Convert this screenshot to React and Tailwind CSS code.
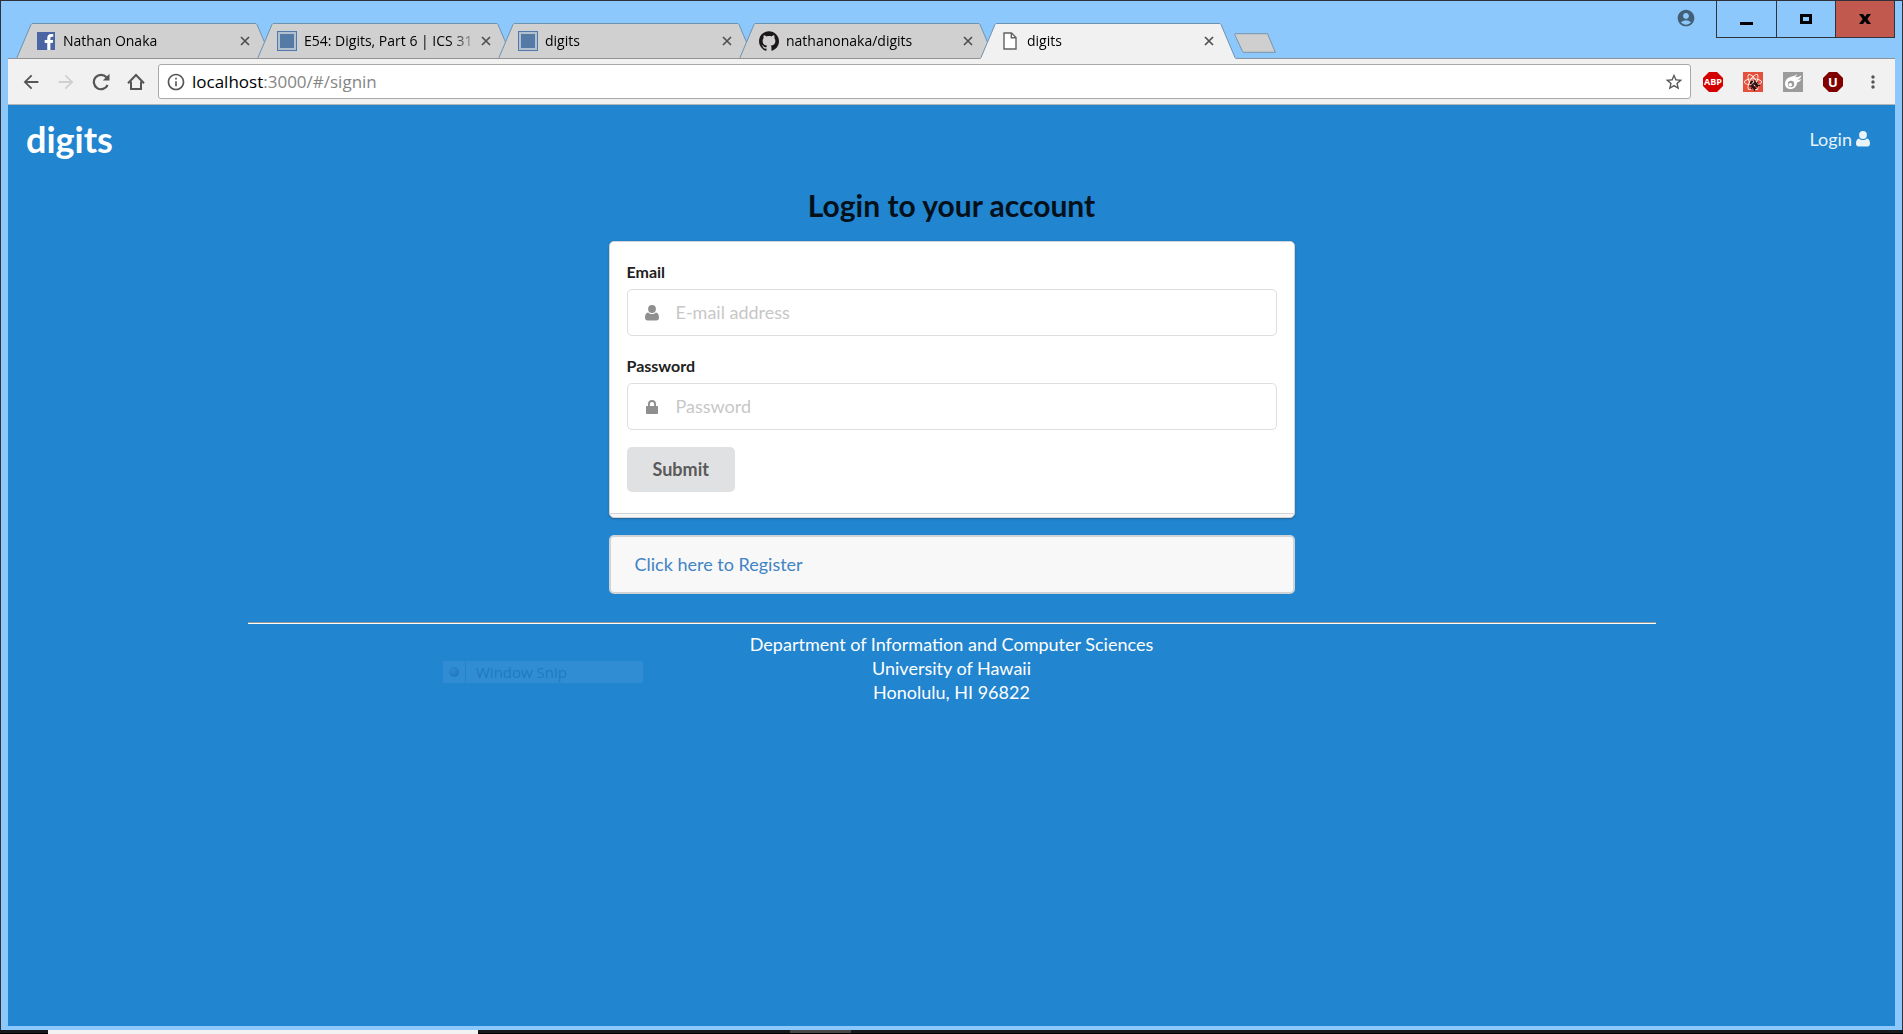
import React from "react";
import {
  MdAccountCircle,
  MdArrowBack,
  MdArrowForward,
  MdMoreVert,
  MdOutlineInfo,
  MdRefresh,
  MdStarBorder,
} from "react-icons/md";
import { SiGithub } from "react-icons/si";
import { FaFacebookF, FaReact, FaBug } from "react-icons/fa";

function FacebookIcon() {
  return (
    <span className="flex h-[18px] w-[18px] items-end justify-end bg-[#4a64a4]">
      <FaFacebookF className="h-4 w-3 text-white" />
    </span>
  );
}

function SquareIcon() {
  return (
    <span className="block h-5 w-5 border border-[#5079ab] bg-[#557aa5] shadow-[inset_0_0_0_2px_#b3c0cf]" />
  );
}

function PageIcon() {
  return (
    <svg viewBox="0 0 14 18" className="h-[18px] w-[14px]" fill="#fff" stroke="#626262" strokeWidth="1.4">
      <path d="M1 1h7.5L13 5.5V17H1z" />
      <path d="M8.3 1v4.8H13" fill="none" />
    </svg>
  );
}

function HomeIcon() {
  return (
    <svg viewBox="0 0 18 18" className="h-[18px] w-[18px]" fill="none" stroke="#555" strokeWidth="2">
      <path d="M1 10.2L9 2l8 8.2" />
      <path d="M4 8.5V16h10V8.5" />
    </svg>
  );
}

function ReloadIcon() {
  return (
    <svg viewBox="0 0 18 18" className="h-[18px] w-[18px]" fill="none" stroke="#555" strokeWidth="2.2">
      <path d="M15.600 12A7.200 7.200 0 1 1 14.500 4.300" />
      <path d="M17.500 .8V7.500H10.800z" fill="#555" stroke="none" />
    </svg>
  );
}

function UserIcon({ className }) {
  return (
    <svg viewBox="0 0 14 16" className={className} fill="currentColor" aria-hidden="true">
      <circle cx="7" cy="4" r="3.9" />
      <path d="M3.2 7.4C4.2 8.4 5.5 9 7 9s2.8-.6 3.8-1.6C13 7.6 14 9.700 14 12.700 14 14.300 13 15.500 11.500 15.500h-9C1 15.500 0 14.300 0 12.700 0 9.700 1 7.600 3.200 7.400z" />
    </svg>
  );
}

function LockIcon({ className }) {
  return (
    <svg viewBox="0 0 14 16" className={className} fill="currentColor" aria-hidden="true">
      <path d="M3 7V5a4 4 0 018 0v2h1.200c.5 0 .8.300.8.800v6.400c0 .5-.3.800-.8.800H1.800c-.5 0-.8-.3-.8-.8V7.800c0-.5.3-.8.8-.8zM4.900 7h4.200V5a2.100 2.100 0 00-4.200 0z" fillRule="evenodd" />
    </svg>
  );
}

function OctagonIcon({ label, fill, size }) {
  return (
    <svg viewBox="0 0 20 20" className="h-5 w-5">
      <path d="M6 0h8l6 6v8l-6 6H6l-6-6V6z" fill={fill} />
      <text
        x="10"
        y={size > 10 ? 15 : 13}
        fill="#fff"
        fontFamily="Open Sans, sans-serif"
        fontWeight="700"
        fontSize={size}
        textAnchor="middle"
      >
        {label}
      </text>
    </svg>
  );
}

function ReactBugIcon() {
  return (
    <span className="relative flex h-5 w-5 items-center justify-center bg-[#e5503c]">
      <FaReact className="h-[18px] w-[18px] text-white" />
      <FaBug className="absolute right-1 bottom-[2px] h-[10px] w-[10px] -rotate-45 text-[#2b1512]" />
    </span>
  );
}

function CometIcon() {
  return (
    <svg viewBox="0 0 20 20" className="h-5 w-5">
      <rect width="20" height="20" fill="#9b9b9b" />
      <path
        d="M2 12C2 7 6 5 9 4.500c2.500-.5 4-1.500 5-2.500-.3 1.500-1 2.500-2 3.200 3 0 5-.7 6.500-2-.5 2.500-2.500 3.800-4 4.500 1.500.2 2.700 0 4-.7-1 2.300-3 3.200-4.500 3.500C14 14.500 11 17 7.800 17 4.500 17 2 15 2 12z"
        fill="#fff"
      />
      <circle cx="8" cy="12" r="3.200" fill="#9b9b9b" />
      <circle cx="7.300" cy="12.700" r="1.800" fill="#fff" />
    </svg>
  );
}

function CloseIcon() {
  return (
    <svg viewBox="0 0 10 10" className="h-[10px] w-[10px]" stroke="#505050" strokeWidth="1.700">
      <path d="M1 1l8 8M9 1L1 9" />
    </svg>
  );
}

const tabs = [
  { title: "Nathan Onaka", icon: <FacebookIcon /> },
  { title: "E54: Digits, Part 6 | ICS 31", icon: <SquareIcon /> },
  { title: "digits", icon: <SquareIcon /> },
  { title: "nathanonaka/digits", icon: <SiGithub className="h-5 w-5 text-[#1b1817]" /> },
  { title: "digits", icon: <PageIcon />, active: true },
];

function Tab({ title, icon, active }) {
  return (
    <div
      role="tab"
      aria-selected={!!active}
      className={`relative -mr-[15px] flex h-9 w-64 min-w-0 items-center pr-[22px] pl-5 ${active ? "z-10" : ""}`}
    >
      <svg
        viewBox="0 0 256 36"
        preserveAspectRatio="none"
        className="absolute inset-0 h-full w-full"
        aria-hidden="true"
      >
        <path d="M0 36L1 34.500 15 1.500 16 .5H240L241 1.500 255 34.500 256 36z" fill={active ? "#f1f1f1" : "#d0d0d0"} />
        <path d="M0 35.500L1 34.500 15 1.500 16 .5H240L241 1.500 255 34.500 256 35.500" fill="none" stroke="#6d93b3" />
        {!active && <path d="M0 35.500H256" stroke="#929292" />}
      </svg>
      <span className="relative flex w-5 shrink-0 justify-center">{icon}</span>
      <span className="relative ml-[7px] min-w-0 flex-1 overflow-hidden text-[14px] leading-5 whitespace-nowrap text-black [mask-image:linear-gradient(to_right,black_86%,transparent_104%)]">
        {title}
      </span>
      <button type="button" aria-label={`Close ${title}`} className="relative ml-2 shrink-0">
        <CloseIcon />
      </button>
    </div>
  );
}

function TitleBar() {
  return (
    <div className="flex h-[58px] items-end justify-between">
      <div role="tablist" className="flex min-w-0 items-end pl-2">
        {tabs.map((tab, i) => (
          <Tab key={i} {...tab} />
        ))}
        <button type="button" aria-label="New tab" className="mb-[6px] ml-[13px] shrink-0">
          <svg viewBox="0 0 42 20" className="h-5 w-[42px]">
            <path d="M1 .7h32.500L41.300 19.300H10Q9 19.300 8.500 18.300L.7 1.500z" fill="#cfcfcf" stroke="#7a93a8" />
          </svg>
        </button>
      </div>
      <div className="flex shrink-0 self-start">
        <button type="button" aria-label="Profile" className="mr-5 flex h-[34px] items-center">
          <MdAccountCircle className="h-5 w-5 text-[#425f78]" />
        </button>
        <div className="flex h-[37px] border border-t-0 border-[#2e343c]">
          <button type="button" aria-label="Minimize" className="flex w-[60px] items-center justify-center border-r border-[#2e343c]">
            <span className="mt-2 h-[3px] w-[13px] bg-black" />
          </button>
          <button type="button" aria-label="Maximize" className="flex w-[59px] items-center justify-center border-r border-[#2e343c]">
            <span className="h-[10px] w-3 border-[3px] border-black" />
          </button>
          <button type="button" aria-label="Close window" className="flex w-[58px] items-center justify-center bg-[#c1594f]">
            <svg viewBox="0 0 12 10" className="h-[10px] w-3" fill="#000">
              <path d="M0 0h4l2 2.800L8 0h4L8.300 5 12 10H8L6 7.200 4 10H0l3.700-5z" />
            </svg>
          </button>
        </div>
      </div>
    </div>
  );
}

function Toolbar() {
  return (
    <div className="-mt-px flex h-[47px] items-center border-t border-b border-t-[#8b949c] border-b-[#b5b5b5] bg-[#f1f1f1] pr-3 pl-3 text-[#555]">
      <div className="flex items-center gap-[13px]">
        <button type="button" aria-label="Back">
          <MdArrowBack className="h-[22px] w-[22px]" />
        </button>
        <button type="button" aria-label="Forward" disabled className="text-[#d0d0d0]">
          <MdArrowForward className="h-[22px] w-[22px]" />
        </button>
        <button type="button" aria-label="Reload" className="flex w-[22px] justify-center">
          <ReloadIcon />
        </button>
        <button type="button" aria-label="Home" className="flex w-[22px] justify-center">
          <HomeIcon />
        </button>
      </div>
      <div className="ml-[11px] flex h-[35px] flex-1 items-center rounded-[3px] border border-[#a9a9a9] bg-white pr-[6px] pl-[7px]">
        <MdOutlineInfo className="h-5 w-5 shrink-0" />
        <div className="ml-[6px] flex-1 text-[17px] leading-6 text-[#858585]">
          <span className="text-black">localhost</span>:3000/#/signin
        </div>
        <button type="button" aria-label="Bookmark this page">
          <MdStarBorder className="h-5 w-5" />
        </button>
      </div>
      <div className="ml-3 flex items-center gap-5">
        <button type="button" aria-label="Adblock Plus">
          <OctagonIcon label="ABP" fill="#d40000" size={9} />
        </button>
        <button type="button" aria-label="React tools">
          <ReactBugIcon />
        </button>
        <button type="button" aria-label="Meteor tools">
          <CometIcon />
        </button>
        <button type="button" aria-label="Blocker">
          <OctagonIcon label="U" fill="#800000" size={13} />
        </button>
        <button type="button" aria-label="Menu">
          <MdMoreVert className="h-6 w-5" />
        </button>
      </div>
    </div>
  );
}

function Field({ id, label, type, placeholder, icon }) {
  return (
    <div>
      <label htmlFor={id} className="mb-[7px] block text-base leading-5 font-bold text-[#212121]">
        {label}
      </label>
      <div className="flex h-[47px] items-center rounded-[5px] border border-[#dedede] bg-white">
        <span className="flex w-12 shrink-0 justify-center text-[#8f8f8f]">{icon}</span>
        <input
          id={id}
          type={type}
          placeholder={placeholder}
          className="h-full min-w-0 flex-1 bg-transparent pb-[2px] text-lg outline-none placeholder:text-[#c7c7c7]"
        />
      </div>
    </div>
  );
}

function SignIn() {
  return (
    <main className="relative flex-1 bg-[#2185d0] font-['Lato',sans-serif] text-lg leading-6 text-white">
      <header className="flex h-[68px] items-center justify-between pr-[25px] pl-[18px]">
        <a href="#/" className="text-[36px] leading-10 font-bold">
          digits
        </a>
        <a href="#/signin" className="flex items-center gap-1 text-[#e9f3fa]">
          Login
          <UserIcon className="h-4 w-[14px]" />
        </a>
      </header>
      <div className="mx-auto flex w-full max-w-[686px] flex-col">
        <h2 className="mt-[14px] text-center text-[30px] leading-9 font-bold text-[#05111a]">Login to your account</h2>
        <div className="mt-[18px] overflow-hidden rounded-[5px] border border-[#d4d4d5] bg-[#f7f7f7] pb-[3px] shadow-[0_1px_2px_0_rgba(34,36,38,0.35)]">
          <form
            onSubmit={(e) => e.preventDefault()}
            className="flex flex-col gap-5 border-b border-[#d4d4d5] bg-white px-[17px] pt-5 pb-[21px]"
          >
            <Field
              id="email"
              label="Email"
              type="email"
              placeholder="E-mail address"
              icon={<UserIcon className="h-4 w-[14px]" />}
            />
            <Field
              id="password"
              label="Password"
              type="password"
              placeholder="Password"
              icon={<LockIcon className="h-4 w-[14px]" />}
            />
            <button
              type="submit"
              className="-mt-[3px] h-[45px] self-start rounded-[5px] bg-[#e0e1e2] px-[26px] pb-[2px] font-bold text-[#5a5a5a]"
            >
              Submit
            </button>
          </form>
        </div>
        <div className="mt-[17px] rounded-[5px] border-2 border-[#d0d3d5] bg-[#f8f8f8] px-6 pt-[15px] pb-4">
          <a href="#/signup" className="text-[#4183c4]">
            Click here to Register
          </a>
        </div>
      </div>
      <footer className="mx-auto mt-7 w-full max-w-[1408px] pb-8 text-center">
        <hr className="mb-2 h-[2px] border-t border-b border-t-[#959595] border-b-white" />
        <div>Department of Information and Computer Sciences</div>
        <div>University of Hawaii</div>
        <div>Honolulu, HI 96822</div>
      </footer>
      <div className="absolute top-[556px] left-[435px] flex h-[22px] w-[200px] items-center bg-[#308dd4] font-['Open_Sans',sans-serif] text-[15px] text-[#2079bf]">
        <span className="flex h-full w-[23px] items-center justify-center border-r border-[#2482cb]">
          <span className="h-[10px] w-[10px] rounded-full bg-[radial-gradient(circle_at_40%_35%,#3089d2,#1b72b9)]" />
        </span>
        <span className="ml-[10px]">Window Snip</span>
      </div>
    </main>
  );
}

export default function App() {
  return (
    <div className="flex min-h-screen flex-col bg-[#16191e] font-['Open_Sans',sans-serif]">
      <div className="flex flex-1 flex-col border border-b-0 border-[#2f3138] bg-[#8cc8fb] px-[7px] pb-1">
        <TitleBar />
        <Toolbar />
        <SignIn />
      </div>
      <div className="flex h-1 border-b border-black pl-[48px]">
        <div className="-mb-px w-[430px] bg-[#f2f2f2]" />
        <div className="ml-[312px] w-[61px] bg-[#484848]" />
      </div>
    </div>
  );
}
